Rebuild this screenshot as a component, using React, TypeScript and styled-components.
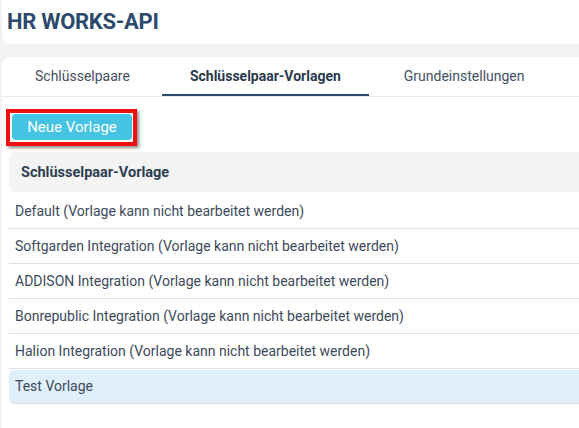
import React from "react";
import styled, { createGlobalStyle } from "styled-components";

const GlobalStyle = createGlobalStyle`
    html, body {
        margin: 0;
        padding: 0;
        background: #f2f2f2;
        font-family: Roboto, "Liberation Sans", Arial, sans-serif;
    }
    #root {
        overflow: hidden;
        min-height: 100vh;
    }
`

const Page = styled.div`
    display: flex;
    flex-direction: column;
    gap: 13px;
    padding-left: 2px;
    min-height: 100vh;
    box-sizing: border-box;
`

const HeaderCard = styled.div`
    height: 44px;
    width: calc(100% + 20px);
    background: #fff;
    border-bottom-left-radius: 8px;
    display: flex;
    align-items: center;
    padding-left: 5px;
    box-sizing: border-box;
`

const Title = styled.h1`
    margin: 0 0 2px 0;
    font-size: 22px;
    font-weight: 700;
    color: #2c4a6d;
    letter-spacing: -0.3px;
`

const ContentCard = styled.div`
    flex: 1;
    width: calc(100% + 20px);
    background: #fff;
    border-top-left-radius: 8px;
    display: flex;
    flex-direction: column;
`

const TabList = styled.div`
    display: flex;
    gap: 7px;
    padding-left: 6px;
    border-bottom: 1px solid #e9e9e9;
`

const Tab = styled.div<{ $active?: boolean }>`
    height: 37px;
    padding: 0 28px;
    display: flex;
    align-items: center;
    font-size: 14px;
    font-weight: ${p => (p.$active ? 700 : 400)};
    color: ${p => (p.$active ? "#2a3a4e" : "#445163")};
    border-bottom: 2px solid ${p => (p.$active ? "#2c4a6d" : "transparent")};
    cursor: pointer;

    &:first-child {
        padding: 0 27px;
        margin-right: -2px;
    }
`

const Body = styled.div`
    display: flex;
    flex-direction: column;
    padding: 12px 0 0 4px;
    gap: 6px;
`

const Highlight = styled.div`
    align-self: flex-start;
    border: 4px solid #f00f0f;
    padding: 1px 1px 2px 2px;
    box-shadow: 2px 2px 3px rgba(0, 0, 0, 0.45);
`

const PrimaryButton = styled.button`
    width: 120px;
    height: 26px;
    border: none;
    border-radius: 4px;
    background: #45c3e3;
    color: #fff;
    font-family: inherit;
    font-size: 15px;
    display: flex;
    align-items: center;
    justify-content: center;
    padding: 0;
    cursor: pointer;
`

const Table = styled.div`
    margin-left: 3px;
    display: flex;
    flex-direction: column;
`

const TableHead = styled.div`
    height: 40px;
    margin-bottom: 1px;
    background: #f4f4f4;
    border-radius: 6px 0 0 6px;
    display: flex;
    align-items: center;
    padding-left: 12px;
    font-size: 14.5px;
    font-weight: 700;
    color: #2d3e52;
`

const Row = styled.div<{ $selected?: boolean; $first?: boolean }>`
    height: ${p => (p.$first ? 36 : 35)}px;
    box-sizing: border-box;
    border-bottom: 1px solid #e0e0e0;
    display: flex;
    align-items: center;
    padding-left: 6px;
    font-size: 14px;
    color: #3d4a5b;
    background: ${p => (p.$selected ? "#dff0fc" : "transparent")};
    border-radius: ${p => (p.$selected ? "6px 0 0 6px" : "0")};
    box-shadow: ${p => (p.$selected ? "inset 0 1px 0 #fff" : "none")};
`

const templates = [
    "Default (Vorlage kann nicht bearbeitet werden)",
    "Softgarden Integration (Vorlage kann nicht bearbeitet werden)",
    "ADDISON Integration (Vorlage kann nicht bearbeitet werden)",
    "Bonrepublic Integration (Vorlage kann nicht bearbeitet werden)",
    "Halion Integration (Vorlage kann nicht bearbeitet werden)",
    "Test Vorlage",
]

export default function App() {
    return (
        <>
            <GlobalStyle />
            <Page>
                <HeaderCard>
                    <Title>HR WORKS-API</Title>
                </HeaderCard>
                <ContentCard>
                    <TabList>
                        <Tab>Schlüsselpaare</Tab>
                        <Tab $active>Schlüsselpaar-Vorlagen</Tab>
                        <Tab>Grundeinstellungen</Tab>
                    </TabList>
                    <Body>
                        <Highlight>
                            <PrimaryButton>Neue Vorlage</PrimaryButton>
                        </Highlight>
                        <Table>
                            <TableHead>Schlüsselpaar-Vorlage</TableHead>
                            {templates.map((t, i) => (
                                <Row key={t} $first={i === 0} $selected={i === templates.length - 1}>
                                    {t}
                                </Row>
                            ))}
                        </Table>
                    </Body>
                </ContentCard>
            </Page>
        </>
    )
}
